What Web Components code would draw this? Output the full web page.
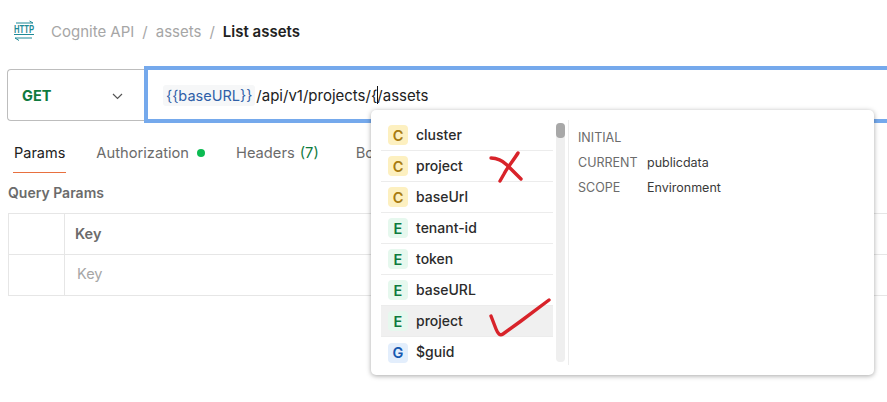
<!DOCTYPE html>
<html>
<head>
<meta charset="utf-8">
<style>
  html, body { margin: 0; height: 100%; background: #fff; overflow: hidden; }
  body { font-family: Inter, "Noto Sans", sans-serif; color: #212121; }
</style>
</head>
<body>
<api-page></api-page>
<script>
class ApiCrumbs extends HTMLElement {
  connectedCallback() {
    this.attachShadow({ mode: 'open' });
    this.shadowRoot.innerHTML = `
      <style>
        :host { display: flex; align-items: center; height: 62px; padding-left: 14px; font-size: 15px; color: #a6a6a6; box-sizing: border-box; }
        svg { width: 20px; height: 20px; margin-right: 17px; overflow: visible; }
        .sep { margin: 0 8px; }
        b { color: #212121; font-weight: 600; }
      </style>
      <svg viewBox="0 0 20 20" fill="none" stroke="#1f8a96" stroke-width="1">
        <path d="M2 2h17M15.5 0l3.5 2"/>
        <text x="0" y="12" font-family="Liberation Sans" font-size="10" font-weight="700" stroke="none" fill="#1f8a96" textLength="20" lengthAdjust="spacingAndGlyphs">HTTP</text>
        <path d="M0 13.5h20"/>
        <path d="M1 17h17M1 17l4 2.5"/>
      </svg>
      <span>Cognite API</span><span class="sep">/</span><span>assets</span><span class="sep">/</span><b>List assets</b>
    `;
  }
}

class RequestBar extends HTMLElement {
  connectedCallback() {
    this.attachShadow({ mode: 'open' });
    this.shadowRoot.innerHTML = `
      <style>
        :host { display: flex; align-items: center; height: 57px; margin-top: 4px; padding-left: 7px; font-size: 15px; }
        .method { width: 137px; height: 52px; box-sizing: border-box; border: 1px solid #bdbdbd; border-right: 0; border-radius: 4px 0 0 4px; display: flex; align-items: center; justify-content: space-between; padding: 2px 20px 0 14px; font-size: 14.5px; font-weight: 700; color: #0f7a3e; }
        .url { flex: 1; height: 57px; box-sizing: border-box; border: 4px solid #75a9ec; border-right: 0; display: flex; align-items: center; padding: 1px 0 0 15px; color: #212121; white-space: nowrap; }
        .chip { background: #f6f7f8; border-radius: 3px; color: #2f5fa8; font-size: 14.5px; padding: 2px 3px; margin-right: 1px; }
        .caret { display: inline-block; width: 1px; height: 18px; background: #111; margin: 0 -1px 0 0; }
      </style>
      <div class="method">GET
        <svg width="12" height="12" viewBox="0 0 12 12" fill="none" stroke="#555" stroke-width="1.2"><path d="M1 4l4.5 4.5L10 4"/></svg>
      </div>
      <div class="url"><span class="chip">{{baseURL}}</span>/api/v1/projects/{<span class="caret"></span>/assets</div>
    `;
  }
}

class TabBar extends HTMLElement {
  connectedCallback() {
    this.attachShadow({ mode: 'open' });
    this.shadowRoot.innerHTML = `
      <style>
        :host { display: flex; height: 50px; padding-left: 13px; font-size: 14.7px; color: #6b6b6b; gap: 29px; box-sizing: border-box; white-space: nowrap; }
        div { display: flex; align-items: center; height: 50px; box-sizing: border-box; padding: 10px 1px 0; }
        .on { color: #212121; font-size: 14.5px; border-bottom: 1px solid #e8703f; }
        .hd { margin-right: 6px; }
        i { width: 8px; height: 8px; border-radius: 50%; background: #0cbb52; margin-left: 8px; }
        em { font-style: normal; color: #0f7a3e; margin-left: 5px; }
      </style>
      <div class="on">Params</div>
      <div>Authorization<i></i></div>
      <div class="hd">Headers<em>(7)</em></div>
      <div>Body</div>
    `;
  }
}

class ParamTable extends HTMLElement {
  connectedCallback() {
    this.attachShadow({ mode: 'open' });
    this.shadowRoot.innerHTML = `
      <style>
        :host { display: block; padding-left: 8px; font-size: 14.5px; }
        h3 { margin: 0; height: 40px; box-sizing: border-box; padding-bottom: 2px; display: flex; align-items: center; font-size: 14px; font-weight: 600; color: #6b6b6b; }
        .t { border: 1px solid #e6e6e6; border-right: 0; }
        .r { display: grid; grid-template-columns: 56px 1fr; height: 40px; }
        .r + .r { border-top: 1px solid #e6e6e6; }
        .r > div { display: flex; align-items: center; padding: 0 0 2px 10px; }
        .r > div:first-child { border-right: 1px solid #e6e6e6; }
        .k { font-weight: 600; color: #6b6b6b; }
        .r > .p { color: #a6a6a6; padding: 0 0 3px 12px; }
      </style>
      <h3>Query Params</h3>
      <div class="t">
        <div class="r"><div></div><div class="k">Key</div></div>
        <div class="r"><div></div><div class="p">Key</div></div>
      </div>
    `;
  }
}

class VarRow extends HTMLElement {
  connectedCallback() {
    const kind = this.getAttribute('kind');
    this.attachShadow({ mode: 'open' });
    this.shadowRoot.innerHTML = `
      <style>
        :host { display: flex; align-items: center; height: 31px; box-sizing: border-box; border-bottom: 1px solid #ececec; padding-left: 7px; font-size: 14px; font-weight: 500; color: #2b2b2b; }
        :host([last]) { border-bottom: 0; }
        :host([hover]) { background: #f0f0f0; }
        .b { width: 20px; height: 20px; border-radius: 4px; margin-right: 8px; display: flex; align-items: center; justify-content: center; font-size: 14.5px; font-weight: 600; }
        .C { background: #fdf0c0; color: #a87b10; }
        .E { background: #e6f8ee; color: #0f7a3e; }
        .G { background: #e3eefc; color: #1558b0; }
        .n { padding-bottom: 2px; }
      </style>
      <span class="b ${kind}">${kind}</span><span class="n"><slot></slot></span>
    `;
  }
}

class VarMenu extends HTMLElement {
  connectedCallback() {
    this.attachShadow({ mode: 'open' });
    this.shadowRoot.innerHTML = `
      <style>
        :host { position: absolute; left: 371px; top: 110px; width: 503px; height: 265px; box-sizing: border-box; background: #fff; border-radius: 5px; box-shadow: 0 1px 5px rgba(0,0,0,.35); display: flex; padding: 9px 0 9px 10px; }
        .list { width: 172px; padding-top: 1px; }
        .bar { position: relative; width: 9px; margin: 4px 0 4px 3px; background: #efefef; border-radius: 4px; }
        .bar::after { content: ""; position: absolute; left: 0; top: 0; width: 9px; height: 15px; border-radius: 4px; background: #a8a8a8; }
        .info { margin: 1px 0; margin-left: 3px; border-left: 1px solid #ececec; padding: 5px 0 0 9px; font-size: 12.5px; color: #6b6b6b; display: grid; grid-template-columns: 69px 1fr; grid-auto-rows: 25px; align-items: center; align-content: start; flex: 1; }
        .info span:nth-child(even) { color: #3a3a3a; }
      </style>
      <div class="list"><slot></slot></div>
      <div class="bar"></div>
      <div class="info">
        <span>INITIAL</span><span></span>
        <span>CURRENT</span><span>publicdata</span>
        <span>SCOPE</span><span>Environment</span>
      </div>
    `;
  }
}

class InkMarks extends HTMLElement {
  connectedCallback() {
    this.attachShadow({ mode: 'open' });
    this.shadowRoot.innerHTML = `
      <style>:host { position: absolute; left: 0; top: 0; width: 887px; height: 402px; pointer-events: none; }</style>
      <svg width="887" height="402" fill="none" stroke="#d8232a" stroke-width="3.4" stroke-linecap="round" stroke-linejoin="round">
        <path d="M491 158c6 0 11 2 16 7s10 10 14 14"/>
        <path d="M518 153c-5 8-11 15-14 21l-4 7"/>
        <path d="M491 316l5 13c2 5 4 7 7 5l18-13 28-21"/>
      </svg>
    `;
  }
}

class ApiPage extends HTMLElement {
  connectedCallback() {
    this.attachShadow({ mode: 'open' });
    this.shadowRoot.innerHTML = `
      <style>:host { display: block; position: relative; width: 887px; height: 402px; overflow: hidden; }</style>
      <api-crumbs></api-crumbs>
      <request-bar></request-bar>
      <tab-bar></tab-bar>
      <param-table></param-table>
      <var-menu>
        <var-row kind="C">cluster</var-row>
        <var-row kind="C">project</var-row>
        <var-row kind="C">baseUrl</var-row>
        <var-row kind="E">tenant-id</var-row>
        <var-row kind="E">token</var-row>
        <var-row kind="E">baseURL</var-row>
        <var-row kind="E" hover>project</var-row>
        <var-row kind="G" last>$guid</var-row>
      </var-menu>
      <ink-marks></ink-marks>
    `;
  }
}

customElements.define('api-crumbs', ApiCrumbs);
customElements.define('request-bar', RequestBar);
customElements.define('tab-bar', TabBar);
customElements.define('param-table', ParamTable);
customElements.define('var-row', VarRow);
customElements.define('var-menu', VarMenu);
customElements.define('ink-marks', InkMarks);
customElements.define('api-page', ApiPage);
</script>
</body>
</html>
